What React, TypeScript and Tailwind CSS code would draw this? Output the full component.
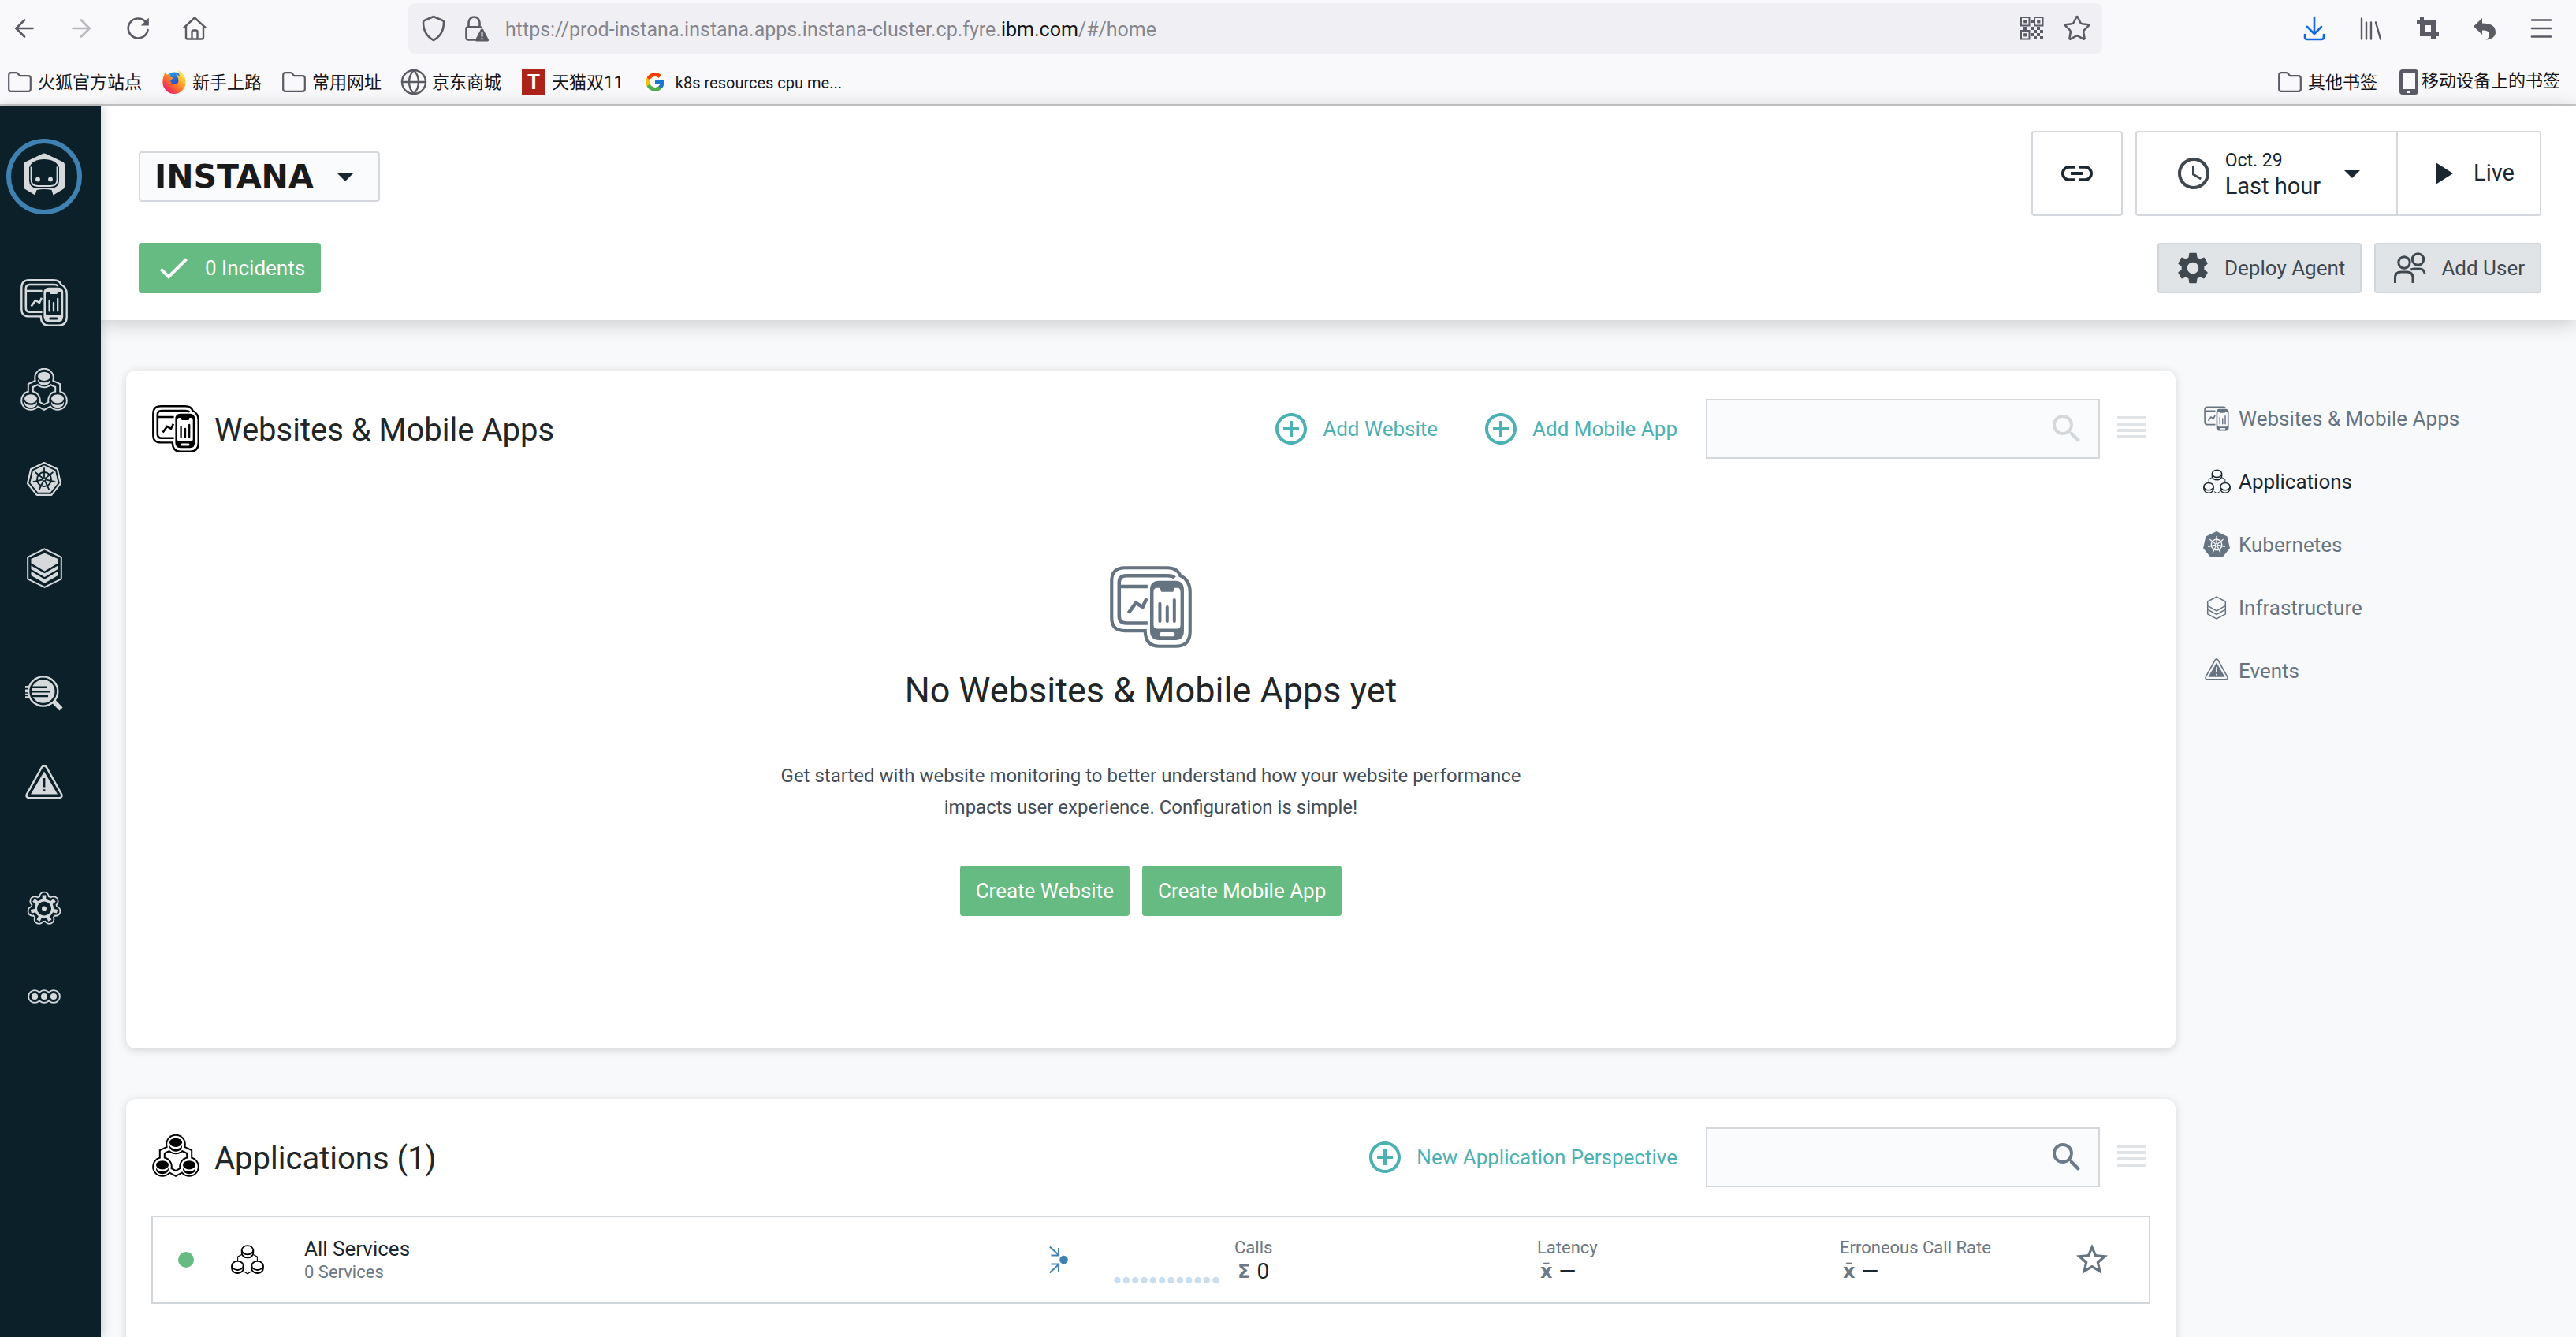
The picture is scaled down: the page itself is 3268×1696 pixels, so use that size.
import React from 'react';
import { ArrowLeft, ArrowRight, Globe, Menu, Star } from 'lucide-react';
import { FcGoogle } from 'react-icons/fc';
import {
  MdAccessTime,
  MdAddCircleOutline,
  MdArrowDropDown,
  MdCheck,
  MdLink,
  MdPlayArrow,
  MdSearch,
  MdSettings,
  MdStarBorder,
} from 'react-icons/md';

type IconProps = { className?: string; hole?: string };

const polar = (cx: number, cy: number, r: number, k: number, n: number) => {
  const a = -Math.PI / 2 + (k * 2 * Math.PI) / n;
  return [cx + r * Math.cos(a), cy + r * Math.sin(a)];
};
const ring = (cx: number, cy: number, r: number, n: number) =>
  Array.from({ length: n }, (_, k) => polar(cx, cy, r, k, n).map((v) => v.toFixed(2)).join(',')).join(' ');
const SEVEN = [0, 1, 2, 3, 4, 5, 6];

/* ---------- product icons ---------- */

function DevicesInner() {
  return (
    <>
      <g fill="none" stroke="currentColor" strokeWidth="2.6">
        <path d="M27.6 41.8H12Q6.8 41.8 6.8 36.8V12Q6.8 7 12 7H42Q46 7 47.5 8.6M6.8 15H27.6" />
        <path d="M13.6 34.4L19 27L24 30L26.9 23.7" />
        <path d="M36.6 27.5V40.4M42 30V40.4M47.2 24.8V40.4" strokeLinecap="round" strokeWidth="2.3" />
      </g>
      <path
        fill="currentColor"
        fillRule="evenodd"
        d="M36 10.8H48Q54.2 10.8 54.2 17.5V47.5Q54.2 54.2 48 54.2H36Q29.4 54.2 29.4 47.5V17.5Q29.4 10.8 36 10.8ZM36.6 16H34.5Q32 16 32 19V43Q32 45.8 34.5 45.8H49.3Q51.7 45.8 51.7 43V19Q51.7 16 49.3 16H47.4L46.4 18.9H37.6ZM37.8 48.5a1.5 1.5 0 0 0 0 3H46a1.5 1.5 0 0 0 0-3Z"
      />
    </>
  );
}

function WebsitesIcon({ className }: IconProps) {
  return (
    <svg viewBox="0 0 60 60" className={className} aria-hidden="true">
      <path
        fill="none"
        stroke="currentColor"
        strokeWidth="2.4"
        d="M11 1.3H42C47 1.3 50 3 51.5 7C56 9 58.7 13 58.7 19V48Q58.7 58.7 48 58.7H36Q26 58.7 25.8 47.4H11Q1.3 47.4 1.3 38V11Q1.3 1.3 11 1.3Z"
      />
      <DevicesInner />
    </svg>
  );
}

function WebsitesSmallIcon({ className }: IconProps) {
  return (
    <svg viewBox="2 2 56 56" className={className} aria-hidden="true">
      <DevicesInner />
    </svg>
  );
}

function ApplicationsIcon({ className, hole = '#ffffff' }: IconProps) {
  const link = 'M30 14L12.8 22V40L30 49.5L47.2 40V22Z';
  const coins = [
    [30, 12.5],
    [13, 41],
    [47, 41],
  ];
  return (
    <svg viewBox="0 0 60 55" className={className} aria-hidden="true">
      <path d={link} fill="none" stroke="currentColor" strokeWidth="8" />
      {coins.map(([x, y]) => (
        <circle key={x} cx={x} cy={y} r="12.8" fill="currentColor" />
      ))}
      <path d={link} fill="none" stroke={hole} strokeWidth="4" />
      {coins.map(([x, y]) => (
        <g key={x}>
          <circle cx={x} cy={y} r="10.8" fill={hole} />
          <ellipse cx={x} cy={y - 2.2} rx="8" ry="5.6" fill="currentColor" />
          <path
            d={`M${x - 8} ${y + 1.6}a8.4 6 0 0 0 16 0v1.6a8 6 0 0 1-16 0Z`}
            fill="currentColor"
          />
        </g>
      ))}
    </svg>
  );
}

function ApplicationsThinIcon({ className }: IconProps) {
  const coins = [
    [21, 6.8],
    [8.4, 26.4],
    [33.6, 26.4],
  ];
  return (
    <svg viewBox="0 0 42 38" className={className} fill="none" stroke="currentColor" aria-hidden="true">
      <path d="M13.6 12.5L8.6 15.2V20.5M28.4 12.5L33.4 15.2V20.5M16.5 34L21 36.8L25.5 34" strokeWidth="1.1" />
      {coins.map(([x, y]) => (
        <g key={x} strokeWidth="1.8">
          <ellipse cx={x} cy={y} rx="7.3" ry="5.6" />
          <path d={`M${x - 7.3} ${y}v3.8a7.3 5.8 0 0 0 14.6 0v-3.8`} />
        </g>
      ))}
    </svg>
  );
}

function Wheel({ hole }: { hole: string }) {
  return (
    <g stroke={hole} fill="none" strokeLinecap="round">
      <circle cx="24" cy="24" r="9" strokeWidth="2" />
      <circle cx="24" cy="24" r="2" strokeWidth="1.4" />
      {SEVEN.map((k) => {
        const [x1, y1] = polar(24, 24, 3, k, 7);
        const [x2, y2] = polar(24, 24, 14, k, 7);
        return <path key={k} d={`M${x1} ${y1}L${x2} ${y2}`} strokeWidth="1.8" />;
      })}
    </g>
  );
}

function KubernetesIcon({ className, hole = '#0b2028' }: IconProps) {
  return (
    <svg viewBox="0 0 48 48" className={className} aria-hidden="true">
      <polygon points={ring(24, 24.5, 21.5, 7)} fill="none" stroke="currentColor" strokeWidth="2.2" strokeLinejoin="round" />
      <polygon points={ring(24, 24.5, 17, 7)} fill="currentColor" stroke="currentColor" strokeLinejoin="round" strokeWidth="2" />
      <Wheel hole={hole} />
    </svg>
  );
}

function KubernetesSmallIcon({ className, hole = '#f8f9fb' }: IconProps) {
  return (
    <svg viewBox="0 0 48 48" className={className} aria-hidden="true">
      <polygon points={ring(24, 24.5, 21.5, 7)} fill="currentColor" stroke="currentColor" strokeLinejoin="round" strokeWidth="3" />
      <Wheel hole={hole} />
    </svg>
  );
}

function InfrastructureIcon({ className }: IconProps) {
  return (
    <svg viewBox="0 0 45 51" className={className} aria-hidden="true">
      <path d="M22.5 1.3L43.8 11.8V39.4L22.5 49.8L1.2 39.4V11.8Z" fill="none" stroke="currentColor" strokeWidth="2" />
      <g fill="currentColor">
        <path d="M22.5 6.4L39.5 14V19.6L22.5 29.6L5.5 19.6V14Z" />
        <path d="M5.5 22.4L22.5 32.2L39.5 22.4V27L22.5 37L5.5 27Z" />
        <path d="M5.5 29.8L22.5 39.8L39.5 29.8V35L22.5 44.8L5.5 35Z" />
      </g>
    </svg>
  );
}

function InfrastructureSmallIcon({ className }: IconProps) {
  return (
    <svg viewBox="0 0 34 34" className={className} fill="none" stroke="currentColor" strokeWidth="1.5" aria-hidden="true">
      <path d="M17 3.2L28.3 9V24.8L17 30.8L5.7 24.8V9Z" />
      <path d="M5.7 14.4L17 20.8L28.3 14.4M5.7 19.2L17 25.4L28.3 19.2" />
    </svg>
  );
}

function AnalyzeIcon({ className, hole = '#0b2028' }: IconProps) {
  return (
    <svg viewBox="0 0 48 46" className={className} aria-hidden="true">
      <path d="M0 13H7V28H0Z" fill="currentColor" />
      <path d="M35 31.5L45.5 42.5" stroke="currentColor" strokeWidth="5.8" />
      <circle cx="22.7" cy="20" r="19.8" fill="currentColor" />
      <circle cx="22.7" cy="20" r="17.4" fill={hole} />
      <circle cx="22.7" cy="20" r="14.8" fill="currentColor" />
      <path d="M0 16.6H4M0 22H4M0 25.4H3" stroke={hole} strokeWidth="1.6" />
      <path d="M7 14.7H27M6 20.3H31M7 26H29" stroke={hole} strokeWidth="2.5" />
    </svg>
  );
}

function WarningIcon({ className, hole = '#0b2028' }: IconProps) {
  return (
    <svg viewBox="0 0 48 44" className={className} aria-hidden="true">
      <path
        d="M21 3.2Q24 -0.4 27 3.2L46 37.5Q47.6 42 43 42.3H5Q0.4 42 2 37.5Z"
        fill="none"
        stroke="currentColor"
        strokeWidth="2.5"
      />
      <path d="M24 8.5L41 37.6H7Z" fill="currentColor" />
      <path d="M24 17V28.5M24 31.2V34" stroke={hole} strokeWidth="2.8" />
    </svg>
  );
}

function SettingsIcon({ className, hole = '#0b2028' }: IconProps) {
  return (
    <svg viewBox="0 0 44 44" className={className} aria-hidden="true">
      <circle cx="22" cy="22.5" r="17" fill="currentColor" />
      {SEVEN.map((k) => {
        const [x, y] = polar(22, 22.5, 15, k, 7);
        return <circle key={k} cx={x} cy={y} r="6.8" fill="currentColor" />;
      })}
      <circle cx="22" cy="22.5" r="15.4" fill={hole} />
      {SEVEN.map((k) => {
        const [x, y] = polar(22, 22.5, 15, k, 7);
        return <circle key={k} cx={x} cy={y} r="5" fill={hole} />;
      })}
      <circle cx="22" cy="22.5" r="12" fill="currentColor" />
      {SEVEN.map((k) => {
        const [x, y] = polar(22, 22.5, 17, k, 7);
        return <path key={k} d={`M22 22.5L${x} ${y}`} stroke="currentColor" strokeWidth="4.6" />;
      })}
      <circle cx="22" cy="22.5" r="9" fill={hole} />
      <circle cx="22" cy="22.5" r="3" fill="currentColor" />
    </svg>
  );
}

function MoreIcon({ className, hole = '#0b2028' }: IconProps) {
  return (
    <svg viewBox="0 0 42 18" className={className} aria-hidden="true">
      {[9, 21, 33].map((x) => (
        <circle key={x} cx={x} cy="9" r="8.8" fill="currentColor" />
      ))}
      {[9, 21, 33].map((x) => (
        <circle key={x} cx={x} cy="9" r="7" fill={hole} />
      ))}
      {[9, 21, 33].map((x) => (
        <circle key={x} cx={x} cy="9" r="4.1" fill="currentColor" />
      ))}
    </svg>
  );
}

function RobotLogo({ className, hole = '#0b2028' }: IconProps) {
  return (
    <svg viewBox="0 0 96 96" className={className} aria-hidden="true">
      <circle cx="48" cy="48" r="45" fill="none" stroke="#3f81b1" strokeWidth="6" />
      <g transform="translate(22 18.5)">
        <path
          d="M24 .6Q26 -.4 28 .6L50 11Q52 12 52 14V42Q52 44.5 50 45.5L37.5 53L35.5 46.5Q26 44.5 16.5 46.5L14.5 53L2 45.5Q0 44.5 0 42V14Q0 12 2 11Z"
          fill="currentColor"
        />
        <path d="M7 18Q11 7.5 26 7.5T45 18V34Q45 44 35 44H17Q7 44 7 34Z" fill={hole} />
        <path d="M9.5 17V33Q9.5 41.5 18 41.5H34Q42.5 41.5 42.5 33V17" fill="none" stroke="currentColor" strokeWidth="1.8" />
        <circle cx="18" cy="33" r="2.9" fill="currentColor" />
        <circle cx="34" cy="33" r="2.9" fill="currentColor" />
      </g>
    </svg>
  );
}

function UsersIcon({ className }: IconProps) {
  return (
    <svg viewBox="0 0 48 48" className={className} fill="none" stroke="currentColor" strokeWidth="3" aria-hidden="true">
      <circle cx="17" cy="17" r="7.2" />
      <circle cx="34.5" cy="13" r="7.2" />
      <path d="M5.5 43V36.5Q5.5 29 13 29H20.5Q28 29 28 36.5V43" />
      <path d="M25.5 26Q28 25 31 25H36Q43 25 43 32" />
    </svg>
  );
}

function ConvergeIcon({ className }: IconProps) {
  return (
    <svg viewBox="0 0 24 36" className={className} fill="none" stroke="#3f81b1" strokeWidth="2" aria-hidden="true">
      <path d="M.8 1.5L12 12M12 3V12.5H2.5M.8 34.5L12 24M12 33V23.5H2.5" />
      <circle cx="18.5" cy="18" r="5.3" fill="#3f81b1" stroke="none" />
    </svg>
  );
}

/* ---------- browser icons ---------- */

function ReloadIcon() {
  return (
    <svg viewBox="0 0 32 32" className="size-8" aria-hidden="true">
      <path d="M28.6 18A12.5 12.5 0 1 1 25.5 7.5" fill="none" stroke="currentColor" strokeWidth="2.6" strokeLinecap="round" />
      <path d="M29.8 2.5V12.5H19.8Z" fill="currentColor" />
    </svg>
  );
}

function HomeIcon() {
  return (
    <svg viewBox="0 0 32 32" className="size-8" fill="none" stroke="currentColor" strokeWidth="2.4" strokeLinecap="round" strokeLinejoin="round" aria-hidden="true">
      <path d="M2.5 15L16 2.5L29.5 15M5 13V27.5Q5 29.5 7 29.5H25Q27 29.5 27 27.5V13" />
      <path d="M12.5 29V20.5Q12.5 18.5 14.5 18.5H17.5Q19.5 18.5 19.5 20.5V29" />
    </svg>
  );
}

function ShieldIcon() {
  return (
    <svg viewBox="0 0 30 34" className="h-[34px] w-[30px]" fill="none" stroke="currentColor" strokeWidth="2.6" strokeLinejoin="round" aria-hidden="true">
      <path d="M15 2L26.5 7Q28 7.5 28 9.5Q28 25 15 32Q2 25 2 9.5Q2 7.5 3.5 7Z" />
    </svg>
  );
}

function LockIcon() {
  return (
    <svg viewBox="0 0 32 34" className="h-[34px] w-8" aria-hidden="true">
      <g fill="none" stroke="currentColor" strokeWidth="2.6">
        <path d="M5.5 15V9.5a7 7 0 0 1 14 0V15" />
        <path d="M13 31.5H5Q2.5 31.5 2.5 29V17.5Q2.5 15.2 5 15.2H19.5Q21.5 15.2 22 17" />
      </g>
      <path d="M20.8 18.5Q22.5 16 24.2 18.5L31 31.5Q31.5 33.5 29.5 33.5H15.5Q13.5 33.5 14 31.5Z" fill="currentColor" />
      <path d="M22.5 22V27.5M22.5 29.2V31.2" stroke="#f0f0f4" strokeWidth="2" />
    </svg>
  );
}

function QrIcon() {
  const cells = [
    [13, 4], [4, 13], [13, 13], [21, 13],
    [17, 17], [25, 17], [13, 21], [21, 21], [17, 25], [25, 25],
  ];
  return (
    <svg viewBox="0 0 30 30" className="size-[30px]" aria-hidden="true">
      {[[0, 0], [17, 0], [0, 17]].map(([x, y]) => (
        <g key={`${x}-${y}`}>
          <rect x={x + 1} y={y + 1} width="10.5" height="10.5" fill="none" stroke="currentColor" strokeWidth="2" />
          <rect x={x + 4.2} y={y + 4.2} width="4.2" height="4.2" fill="currentColor" />
        </g>
      ))}
      {cells.map(([x, y]) => (
        <rect key={`${x}-${y}`} x={x} y={y} width="4" height="4" fill="currentColor" />
      ))}
    </svg>
  );
}

function DownloadIcon() {
  return (
    <svg viewBox="0 0 32 32" className="size-8 text-[#1467e0]" fill="none" stroke="currentColor" strokeWidth="2.6" strokeLinecap="round" strokeLinejoin="round" aria-hidden="true">
      <path d="M16 2V22M7 14L16 23L25 14M4 24V27Q4 30 7 30H25Q28 30 28 27V24" />
    </svg>
  );
}

function LibraryIcon() {
  return (
    <svg viewBox="0 0 32 32" className="size-8" fill="none" stroke="currentColor" strokeWidth="2.4" strokeLinecap="round" aria-hidden="true">
      <path d="M4 3.5V29.5M10 8.5V29.5M16 8.5V29.5M22 8.5L28 29.5" />
    </svg>
  );
}

function CropIcon() {
  return (
    <svg viewBox="0 0 32 32" className="size-8" aria-hidden="true">
      <path d="M6 2H11V6H26V21H30V26H26V30H20V26H6V11H2V6H6ZM12 12V20H20V12Z" fill="currentColor" fillRule="evenodd" />
    </svg>
  );
}

function ReplyIcon() {
  return (
    <svg viewBox="0 0 32 32" className="size-8" aria-hidden="true">
      <path d="M13 3V9.5C24 9.5 30 13 30 21C30 27 24.5 30 17.5 30.5C21 28.5 22.5 26 22 23C21.5 19.5 18.5 18.5 13 18.5V24L2 13.5Z" fill="currentColor" />
    </svg>
  );
}

function FolderIcon() {
  return (
    <svg viewBox="0 0 30 26" className="h-[26px] w-[30px] text-[#5b5b66]" fill="none" stroke="currentColor" strokeWidth="2.2" strokeLinejoin="round" aria-hidden="true">
      <path d="M4 1.2H10.5Q12 1.2 13 2.5L15 5.2H26Q28.8 5.2 28.8 8V22Q28.8 24.8 26 24.8H4Q1.2 24.8 1.2 22V4Q1.2 1.2 4 1.2Z" />
    </svg>
  );
}

function FirefoxIcon() {
  return (
    <svg viewBox="0 0 30 30" className="size-[30px]" aria-hidden="true">
      <defs>
        <linearGradient id="ff-flame" x1="0.9" y1="0.1" x2="0.2" y2="0.9">
          <stop offset="0" stopColor="#fff44f" />
          <stop offset="0.35" stopColor="#ffb02e" />
          <stop offset="0.65" stopColor="#ff6a2b" />
          <stop offset="1" stopColor="#e8216b" />
        </linearGradient>
        <linearGradient id="ff-globe" x1="0.2" y1="0" x2="0.7" y2="1">
          <stop offset="0" stopColor="#1fa4f5" />
          <stop offset="1" stopColor="#3b1fa8" />
        </linearGradient>
      </defs>
      <circle cx="15" cy="14" r="11.5" fill="url(#ff-globe)" />
      <path
        d="M3 2Q4 4.500 6 5.5Q8.5 4.5 10.5 5.5Q9 7 9.5 8.5L13.5 9.5Q12.5 12 10 13Q11 18 15.5 18Q20 18 20.5 13.5Q20 8 17 5.5Q20.5 5.5 22 8Q21 3.5 20 0Q29.6 5.5 29.6 15.5A14.6 14.4 0 0 1 .4 15.5Q.4 9 2.5 6Z"
        fill="url(#ff-flame)"
      />
    </svg>
  );
}

function PhoneIcon() {
  return (
    <svg viewBox="0 0 24 32" className="h-8 w-6 text-[#5b5b66]" aria-hidden="true">
      <path
        d="M4 0H20Q24 0 24 4V28Q24 32 20 32H4Q0 32 0 28V4Q0 0 4 0ZM4 4V25H20V4ZM10 27.5V30H14V27.5Z"
        fill="currentColor"
        fillRule="evenodd"
      />
    </svg>
  );
}

/* ---------- browser chrome ---------- */

function ToolButton({ label, children, faded }: { label: string; children: React.ReactNode; faded?: boolean }) {
  return (
    <button type="button" aria-label={label} className={faded ? 'flex w-10 justify-center opacity-40' : 'flex w-10 justify-center'}>
      {children}
    </button>
  );
}

function Bookmark({ icon, children }: { icon: React.ReactNode; children: React.ReactNode }) {
  return (
    <a href="#" className="flex items-center gap-2 whitespace-nowrap">
      {icon}
      <span>{children}</span>
    </a>
  );
}

function BrowserChrome() {
  return (
    <div className="shrink-0 border-b-2 border-[#cccccc] bg-[#f9f9fb] text-[#5b5b66]">
      <div className="flex h-[72px] items-center pr-6 pl-[11px]">
        <div className="flex w-[507px] shrink-0 items-center gap-8">
          <ToolButton label="Back"><ArrowLeft className="size-9" strokeWidth={1.8} /></ToolButton>
          <ToolButton label="Forward" faded><ArrowRight className="size-9" strokeWidth={1.8} /></ToolButton>
          <ToolButton label="Reload"><ReloadIcon /></ToolButton>
          <ToolButton label="Home"><HomeIcon /></ToolButton>
        </div>
        <div className="flex h-16 flex-1 items-center rounded-lg bg-[#f0f0f4] pr-[14px] pl-[17px]">
          <ShieldIcon />
          <span className="ml-6"><LockIcon /></span>
          <div className="ml-5 flex-1 pt-[3px] text-[25px] text-[#86858d]">
            https://prod-instana.instana.apps.instana-cluster.cp.fyre.<span className="text-[#15141a]">ibm.com</span>/#/home
          </div>
          <button type="button" aria-label="QR code"><QrIcon /></button>
          <button type="button" aria-label="Bookmark this page" className="ml-6"><Star className="size-9" strokeWidth={1.7} /></button>
        </div>
        <div className="ml-[249px] flex shrink-0 items-center gap-8">
          <ToolButton label="Downloads"><DownloadIcon /></ToolButton>
          <ToolButton label="Library"><LibraryIcon /></ToolButton>
          <ToolButton label="Screenshot"><CropIcon /></ToolButton>
          <ToolButton label="Undo close tab"><ReplyIcon /></ToolButton>
          <ToolButton label="Open menu"><Menu className="size-9" strokeWidth={1.8} /></ToolButton>
        </div>
      </div>
      <div className="flex h-[60px] items-center justify-between pt-1 pr-5 pl-[10px] text-[22px] text-[#15141a]">
        <div className="flex items-center gap-[26px]">
          <Bookmark icon={<FolderIcon />}>火狐官方站点</Bookmark>
          <Bookmark icon={<FirefoxIcon />}>新手上路</Bookmark>
          <Bookmark icon={<FolderIcon />}>常用网址</Bookmark>
          <Bookmark icon={<Globe className="-mx-[3px] size-9 text-[#5b5b66]" strokeWidth={1.6} />}>京东商城</Bookmark>
          <Bookmark
            icon={<span className="flex h-8 w-[30px] items-center justify-center bg-[#ae2319] text-[26px] leading-8 font-bold text-white">T</span>}
          >
            天猫双11
          </Bookmark>
          <Bookmark icon={<span className="mr-1 rounded-full bg-white"><FcGoogle className="size-7" /></span>}>
            <span className="text-[20px]">k8s resources cpu me...</span>
          </Bookmark>
        </div>
        <div className="flex items-center gap-[28px]">
          <Bookmark icon={<FolderIcon />}>其他书签</Bookmark>
          <a href="#" className="flex items-center gap-1 whitespace-nowrap">
            <PhoneIcon />
            <span className="pb-1">移动设备上的书签</span>
          </a>
        </div>
      </div>
    </div>
  );
}

/* ---------- application ---------- */

function SideButton({ label, children }: { label: string; children: React.ReactNode }) {
  return (
    <button type="button" aria-label={label} className="flex h-28 w-28 items-center justify-center">
      {children}
    </button>
  );
}

function Sidebar() {
  return (
    <nav aria-label="Main" className="relative z-20 flex w-32 shrink-0 flex-col bg-[#0b2028] text-[#d5d9dc] shadow-[2px_0_12px_rgba(0,0,0,0.18)]">
      <a href="#" aria-label="Home" className="mt-[42px] ml-2 block size-24">
        <RobotLogo className="size-24" />
      </a>
      <div className="mt-14 flex flex-col">
        <SideButton label="Websites &amp; Mobile Apps"><WebsitesIcon className="size-[60px]" /></SideButton>
        <SideButton label="Applications"><ApplicationsIcon hole="#0b2028" className="mb-1 h-[55px] w-[60px]" /></SideButton>
        <SideButton label="Kubernetes"><KubernetesIcon className="size-12" /></SideButton>
        <SideButton label="Infrastructure"><InfrastructureIcon className="h-[51px] w-[45px]" /></SideButton>
      </div>
      <div className="mt-12 flex flex-col">
        <SideButton label="Analytics"><AnalyzeIcon className="h-[46px] w-12" /></SideButton>
        <SideButton label="Events"><WarningIcon className="h-11 w-12" /></SideButton>
      </div>
      <div className="mt-12 flex flex-col">
        <SideButton label="Settings"><SettingsIcon className="size-11" /></SideButton>
        <SideButton label="More"><MoreIcon className="h-[18px] w-[42px]" /></SideButton>
      </div>
    </nav>
  );
}

function PageHeader() {
  return (
    <header className="relative z-10 flex shrink-0 items-end justify-between bg-white pt-8 pr-11 pb-[34px] pl-12 shadow-[0_4px_24px_rgba(0,0,0,0.2)]">
      <div className="flex flex-col items-start gap-[52px]">
        <button type="button" aria-haspopup="listbox" className="flex h-16 items-center gap-4 rounded-[4px] border-2 border-[#d4d8dc] bg-[#fafbfd] px-[18px] text-[#1a1a1a]">
          <span className="font-['DejaVu_Sans'] text-[41px] leading-none font-bold">INSTANA</span>
          <MdArrowDropDown className="size-12 text-[#1a2730]" />
        </button>
        <button type="button" className="flex h-16 items-center gap-4 rounded-[4px] bg-[#65bb81] px-5 text-[26px] text-white">
          <MdCheck className="size-12" />
          0 Incidents
        </button>
      </div>
      <div className="flex flex-col items-end gap-[34px] text-[#1a2730]">
        <div className="flex h-[108px] gap-4">
          <button type="button" aria-label="Copy link" className="flex w-[116px] items-center justify-center rounded-[4px] border-2 border-[#d4d8dc]">
            <MdLink className="size-12" />
          </button>
          <div className="flex rounded-[4px] border-2 border-[#d4d8dc]">
            <button type="button" aria-haspopup="dialog" className="flex items-center gap-4 border-r-2 border-[#d4d8dc] pr-8 pl-12 text-left">
              <MdAccessTime className="size-12 text-[#3f474f]" />
              <span className="flex flex-col">
                <span className="text-[23px] leading-8">Oct. 29</span>
                <span className="text-[29px] leading-8">Last hour</span>
              </span>
              <MdArrowDropDown className="size-12" />
            </button>
            <button type="button" className="flex items-center gap-4 px-8 text-[29px]">
              <MdPlayArrow className="size-12" />
              Live
            </button>
          </div>
        </div>
        <div className="flex gap-4 text-[26px] text-[#3f474f]">
          <button type="button" className="flex h-16 items-center gap-4 rounded-[4px] border-2 border-[#d1d6da] bg-[#e0e4e7] px-[19px]">
            <MdSettings className="size-12" />
            Deploy Agent
          </button>
          <button type="button" className="flex h-16 items-center gap-4 rounded-[4px] border-2 border-[#d1d6da] bg-[#e0e4e7] px-[19px]">
            <UsersIcon className="size-12" />
            Add User
          </button>
        </div>
      </div>
    </header>
  );
}

function AddButton({ children }: { children: React.ReactNode }) {
  return (
    <button type="button" className="flex items-center gap-4 text-[26px] text-[#4cb1b3]">
      <MdAddCircleOutline className="size-12" />
      {children}
    </button>
  );
}

function SearchBox({ label, active }: { label: string; active?: boolean }) {
  return (
    <div className="relative h-[76px] w-[500px]">
      <input
        type="text"
        aria-label={label}
        className="h-full w-full border-2 border-[#d4d8da] bg-[#fafbfd] pr-20 pl-5 text-[26px] outline-none"
      />
      <MdSearch className={active ? 'absolute top-[14px] right-[18px] size-12 text-[#6b7a88]' : 'absolute top-[14px] right-[18px] size-12 text-[#d4d8da]'} />
    </div>
  );
}

function CardHeader({ icon, title, actions, search }: { icon: React.ReactNode; title: string; actions: React.ReactNode; search: React.ReactNode }) {
  return (
    <div className="flex h-[76px] items-center">
      <div className="flex w-[62px] justify-center text-black">{icon}</div>
      <h2 className="ml-[18px] flex-1 pt-1 text-[40px] leading-[48px] text-[#222626]">{title}</h2>
      <div className="mr-9 flex gap-14">{actions}</div>
      {search}
      <button type="button" aria-label="Reorder" className="mr-[6px] mb-1 ml-[22px] flex w-9 flex-col gap-1">
        <span className="h-1 bg-[#e0e3e6]" />
        <span className="h-1 bg-[#e0e3e6]" />
        <span className="h-1 bg-[#e0e3e6]" />
        <span className="h-1 bg-[#e0e3e6]" />
      </button>
    </div>
  );
}

function WebsitesCard() {
  return (
    <section className="shrink-0 rounded-xl bg-white px-8 pt-9 pb-[168px] shadow-[0_2px_12px_rgba(0,0,0,0.16)]">
      <CardHeader
        icon={<WebsitesIcon className="size-[60px]" />}
        title="Websites & Mobile Apps"
        actions={
          <>
            <AddButton>Add Website</AddButton>
            <AddButton>Add Mobile App</AddButton>
          </>
        }
        search={<SearchBox label="Search websites" />}
      />
      <div className="flex flex-col items-center pt-[136px] text-center">
        <WebsitesIcon className="size-[104px] text-[#667482]" />
        <h3 className="mt-[26px] text-[45px] leading-[56px] text-[#222626]">No Websites &amp; Mobile Apps yet</h3>
        <p className="mt-[60px] text-[24px] leading-10 text-[#434c57]">
          Get started with website monitoring to better understand how your website performance
          <br />
          impacts user experience. Configuration is simple!
        </p>
        <div className="mt-[54px] flex gap-4 text-[26px] text-white">
          <button type="button" className="h-16 rounded-[4px] bg-[#65bb81] px-5">Create Website</button>
          <button type="button" className="h-16 rounded-[4px] bg-[#65bb81] px-5">Create Mobile App</button>
        </div>
      </div>
    </section>
  );
}

function Metric({ label, symbol, value, className }: { label: string; symbol: string; value: string; className: string }) {
  return (
    <div className={className}>
      <div className="text-[22px] leading-[30px] text-[#6b7885]">{label}</div>
      <div className="flex h-[30px] items-center gap-2 pl-1">
        <span className="font-['DejaVu_Sans'] text-[24px] leading-[30px] font-bold text-[#6b7885]">{symbol}</span>
        <span className="text-[28px] leading-[30px] text-[#1a2730]">{value}</span>
      </div>
    </div>
  );
}

function ApplicationsCard() {
  const points = Array.from({ length: 12 }, (_, i) => i);
  return (
    <section className="min-h-[420px] shrink-0 rounded-xl bg-white px-8 pt-9 shadow-[0_2px_12px_rgba(0,0,0,0.16)]">
      <CardHeader
        icon={<ApplicationsIcon className="mb-1 h-[55px] w-[60px]" />}
        title="Applications (1)"
        actions={<AddButton>New Application Perspective</AddButton>}
        search={<SearchBox label="Search applications" active />}
      />
      <ul className="mt-9">
        <li className="flex h-28 items-center border-2 border-[#d1d6db] pr-12 pl-8">
          <span className="size-5 rounded-full bg-[#65bb81]" />
          <ApplicationsThinIcon className="ml-[47px] h-[38px] w-[42px] text-black" />
          <div className="ml-[51px] flex-1">
            <a href="#" className="block text-[26px] leading-8 text-[#1a2730]">All Services</a>
            <div className="text-[22px] leading-7 text-[#6b7885]">0 Services</div>
          </div>
          <ConvergeIcon className="h-9 w-6" />
          <svg viewBox="0 0 134 112" className="mr-[19px] ml-[58px] h-28 w-[134px]" aria-hidden="true">
            {points.map((i) => (
              <circle key={i} cx={4.5 + i * 11.35} cy="82" r="4.2" fill="#c9deee" />
            ))}
          </svg>
          <Metric className="w-96" label="Calls" symbol="Σ" value="0" />
          <Metric className="w-96" label="Latency" symbol="x̄" value="—" />
          <Metric className="w-[296px]" label="Erroneous Call Rate" symbol="x̄" value="—" />
          <button type="button" aria-label="Add to favourites" className="text-[#667482]">
            <MdStarBorder className="size-12" />
          </button>
        </li>
      </ul>
    </section>
  );
}

function NavLink({ icon, children, active }: { icon: React.ReactNode; children: React.ReactNode; active?: boolean }) {
  return (
    <a href="#" className={active ? 'flex h-20 items-center gap-[10px] text-[#1a2730]' : 'flex h-20 items-center gap-[10px] text-[#667482]'}>
      <span className="flex w-9 justify-center">{icon}</span>
      {children}
    </a>
  );
}

export default function App() {
  return (
    <div className="flex h-screen flex-col overflow-hidden bg-[#f8f9fb] font-[Roboto,'Noto_Sans_CJK_SC',sans-serif]">
      <BrowserChrome />
      <div className="flex min-h-0 flex-1">
        <Sidebar />
        <div className="flex min-w-0 flex-1 flex-col">
          <PageHeader />
          <main className="flex min-h-0 flex-1 pl-8">
            <div className="flex min-w-0 flex-1 flex-col gap-16 pt-16">
              <WebsitesCard />
              <ApplicationsCard />
            </div>
            <aside className="w-[508px] shrink-0 pt-[85px] pl-[34px] text-[26px]">
              <NavLink icon={<WebsitesSmallIcon className="size-9" />}>Websites &amp; Mobile Apps</NavLink>
              <NavLink active icon={<ApplicationsThinIcon className="h-8 w-[35px]" />}>Applications</NavLink>
              <NavLink icon={<KubernetesSmallIcon className="size-9" />}>Kubernetes</NavLink>
              <NavLink icon={<InfrastructureSmallIcon className="size-[34px]" />}>Infrastructure</NavLink>
              <NavLink icon={<WarningIcon hole="#f8f9fb" className="mb-1 h-7 w-[30px]" />}>Events</NavLink>
            </aside>
          </main>
        </div>
      </div>
    </div>
  );
}
